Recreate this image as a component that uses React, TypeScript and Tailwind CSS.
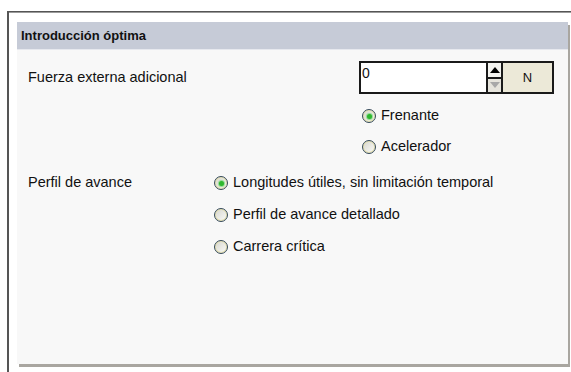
import { useState } from 'react';

// XP-style radio bullet
function Radio({ checked }: { checked: boolean }) {
  return (
    <span className="w-[14px] h-[14px] rounded-full border-[1.5px] border-[#34495a] bg-gradient-to-br from-[#d6d6ce] to-[#fbfbf9] flex items-center justify-center shrink-0 shadow-[inset_0_0_0_1px_#e6e1b0]">
      {checked && (
        <span className="w-[5px] h-[5px] rounded-full bg-[#2eb82e] shadow-[0_0_1px_1px_#8ed98e]" />
      )}
    </span>
  );
}

function RadioRow({ label, checked, onClick }: { label: string; checked: boolean; onClick: () => void }) {
  return (
    <div onClick={onClick} className="h-[20px] flex items-center gap-[5px] cursor-default">
      <Radio checked={checked} />
      <span>{label}</span>
    </div>
  );
}

export default function App() {
  const [force, setForce] = useState('0');
  const [mode, setMode] = useState<'frenante' | 'acelerador'>('frenante');
  const [perfil, setPerfil] = useState(0);

  const perfiles = [
    'Longitudes útiles, sin limitación temporal',
    'Perfil de avance detallado',
    'Carrera crítica',
  ];

  return (
    <div className="w-[571px] h-[372px] bg-white pt-[11px] pl-[7px] overflow-hidden font-['Liberation_Sans',Arial,sans-serif] text-[14.5px] text-[#111]">
      <div className="h-full border-l-2 border-t border-[#555] shadow-[inset_0_1px_0_#9a9a9a] pl-[8px] pt-[10px]">
        <div className="w-[551px] h-[342px] bg-[#f8f8f8] shadow-[2px_3px_0_#a9a6a0] flex flex-col">
          <div className="h-[28px] bg-[#c6cbd7] border-b border-[#e6e8ee] flex items-center px-[4px] pt-[1px] font-bold text-[13px] text-[#111]">
            Introducción óptima
          </div>

          <div className="pl-[11px] pt-[11px] flex flex-col">
            <div className="flex">
              <div className="w-[331px] h-[33px] flex items-center">Fuerza externa adicional</div>
              <div className="flex flex-col">
                <div className="h-[33px] w-[195px] flex border-2 border-[#1a1a1a]">
                  <input
                    value={force}
                    onChange={(e) => setForce(e.target.value)}
                    className="w-[125px] h-full bg-white outline-none px-[1px] pb-[9px] text-[14px]"
                  />
                  <div className="w-[17px] border-l-2 border-r-2 border-[#1a1a1a] flex flex-col">
                    <div className="flex-1 bg-[#f4f4f0] border-b-2 border-[#1a1a1a] flex items-center justify-center">
                      <span className="w-0 h-0 border-l-[5px] border-r-[5px] border-b-[6px] border-l-transparent border-r-transparent border-b-black" />
                    </div>
                    <div className="flex-1 bg-[#e6e4dc] flex items-center justify-center">
                      <span className="w-0 h-0 border-l-[5px] border-r-[5px] border-t-[6px] border-l-transparent border-r-transparent border-t-[#a8a8a8]" />
                    </div>
                  </div>
                  <div className="flex-1 bg-[#ece9d8] flex items-center justify-center text-[13px]">N</div>
                </div>
                <div className="pl-[3px] pt-[12px] flex flex-col gap-[11px]">
                  <RadioRow label="Frenante" checked={mode === 'frenante'} onClick={() => setMode('frenante')} />
                  <RadioRow label="Acelerador" checked={mode === 'acelerador'} onClick={() => setMode('acelerador')} />
                </div>
              </div>
            </div>

            <div className="flex mt-[16px]">
              <div className="w-[186px] h-[20px] flex items-center">Perfil de avance</div>
              <div className="flex flex-col gap-[12px]">
                {perfiles.map((p, i) => (
                  <RadioRow key={p} label={p} checked={perfil === i} onClick={() => setPerfil(i)} />
                ))}
              </div>
            </div>
          </div>
        </div>
      </div>
    </div>
  );
}
